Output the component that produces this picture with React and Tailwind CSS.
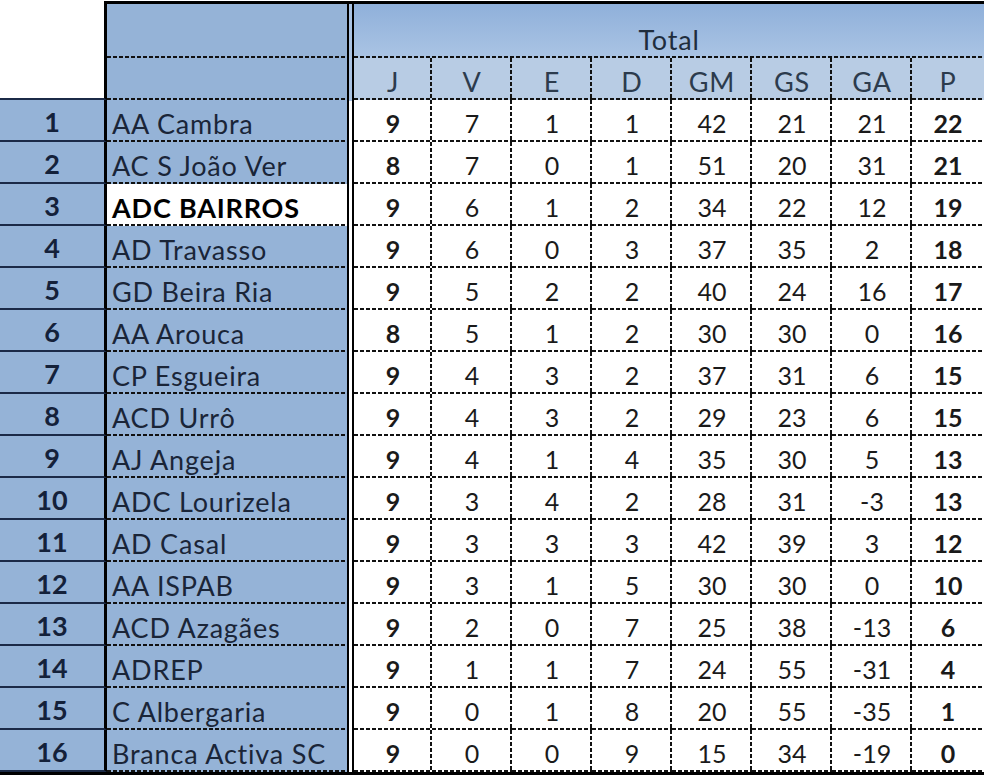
import React from "react";

const teams = [
  [1, "AA Cambra", 9, 7, 1, 1, 42, 21, 21, 22],
  [2, "AC S João Ver", 8, 7, 0, 1, 51, 20, 31, 21],
  [3, "ADC BAIRROS", 9, 6, 1, 2, 34, 22, 12, 19],
  [4, "AD Travasso", 9, 6, 0, 3, 37, 35, 2, 18],
  [5, "GD Beira Ria", 9, 5, 2, 2, 40, 24, 16, 17],
  [6, "AA Arouca", 8, 5, 1, 2, 30, 30, 0, 16],
  [7, "CP Esgueira", 9, 4, 3, 2, 37, 31, 6, 15],
  [8, "ACD Urrô", 9, 4, 3, 2, 29, 23, 6, 15],
  [9, "AJ Angeja", 9, 4, 1, 4, 35, 30, 5, 13],
  [10, "ADC Lourizela", 9, 3, 4, 2, 28, 31, -3, 13],
  [11, "AD Casal", 9, 3, 3, 3, 42, 39, 3, 12],
  [12, "AA ISPAB", 9, 3, 1, 5, 30, 30, 0, 10],
  [13, "ACD Azagães", 9, 2, 0, 7, 25, 38, -13, 6],
  [14, "ADREP", 9, 1, 1, 7, 24, 55, -31, 4],
  [15, "C Albergaria", 9, 0, 1, 8, 20, 55, -35, 1],
  [16, "Branca Activa SC", 9, 0, 0, 9, 15, 34, -19, 0],
];

const labels = ["J", "V", "E", "D", "GM", "GS", "GA", "P"];

// excel-style dotted grid lines, drawn as backgrounds so the dash rhythm is tight
const dashBottom =
  "bg-[repeating-linear-gradient(90deg,#111_0_4px,transparent_4px_6px)] bg-[length:100%_2px] bg-bottom bg-no-repeat";
const dashBottomRight =
  "bg-[repeating-linear-gradient(90deg,#111_0_4px,transparent_4px_6px),repeating-linear-gradient(180deg,#111_0_4px,transparent_4px_6px)] bg-[length:100%_2px,2px_100%] bg-[position:bottom,right] bg-no-repeat";

const Standings = () => {
  return (
    <div className="w-[984px] h-[776px] bg-white overflow-hidden pt-px font-['Lato','Liberation_Sans',sans-serif] text-[25px] leading-none">
      <div className="grid grid-cols-[107px_240px_7px_78px_80px_80px_80px_80px_80px_80px_72px] grid-rows-[3px_54px_42px_repeat(16,42px)_3px]">
        {/* top left blank corner */}
        <div className="col-start-1 row-start-1 row-span-3 bg-white border-r-[3px] border-b-2 border-r-black border-b-[#1b2a47]" />
        <div className="col-start-2 col-span-10 row-start-1 bg-black" />

        {/* double line between names and numbers */}
        <div className="col-start-3 row-start-2 row-span-18 border-x-2 border-black bg-[linear-gradient(to_bottom,#a9c2e2_97px,#ffffff_97px)]" />

        {/* header row 1 */}
        <div className={`bg-[#95b3d7] ${dashBottom}`} />
        <div className="col-span-8 flex items-end justify-center pb-[5px] text-[27px] tracking-[0.8px] text-[#1f2d3d] bg-[repeating-linear-gradient(90deg,#111_0_4px,transparent_4px_6px),linear-gradient(to_bottom,#8fb0da,#aac4e4)] bg-[length:100%_2px,100%_100%] bg-[position:bottom,0_0] bg-no-repeat">
          Total
        </div>

        {/* header row 2 */}
        <div className={`bg-[#95b3d7] ${dashBottom}`} />
        {labels.map((label, i) => (
          <div
            key={label}
            className={`flex items-end justify-center pb-[5px] text-[27px] tracking-[0.8px] bg-[#b8cce4] text-[#2c3b4d] ${
              i < labels.length - 1 ? dashBottomRight : dashBottom
            }`}
          >
            {label}
          </div>
        ))}

        {/* team rows */}
        {teams.map(([pos, name, ...stats]) => (
          <React.Fragment key={pos}>
            <div className="flex items-end justify-center pb-[5px] text-[27px] bg-[#95b3d7] border-r-[3px] border-b-2 border-r-black border-b-[#1b2a47] font-bold text-[#14213a]">
              {pos}
            </div>
            <div
              className={`flex items-end pl-[5px] pb-[5px] text-[27px] tracking-[0.8px] whitespace-nowrap ${dashBottom} ${
                pos === 3
                  ? "bg-white font-bold text-black"
                  : "bg-[#95b3d7] text-[#1a2538]"
              }`}
            >
              {name}
            </div>
            {stats.map((value, i) => (
              <div
                key={i}
                className={`flex items-end justify-center pb-[6px] bg-white text-[#1a1a1a] ${
                  i < stats.length - 1 ? dashBottomRight : dashBottom
                } ${i === 0 || i === stats.length - 1 ? "font-bold" : ""}`}
              >
                {value}
              </div>
            ))}
          </React.Fragment>
        ))}

        <div className="col-start-1 col-span-11 bg-black" />
      </div>
    </div>
  );
};

export default function App() {
  return <Standings />;
}
